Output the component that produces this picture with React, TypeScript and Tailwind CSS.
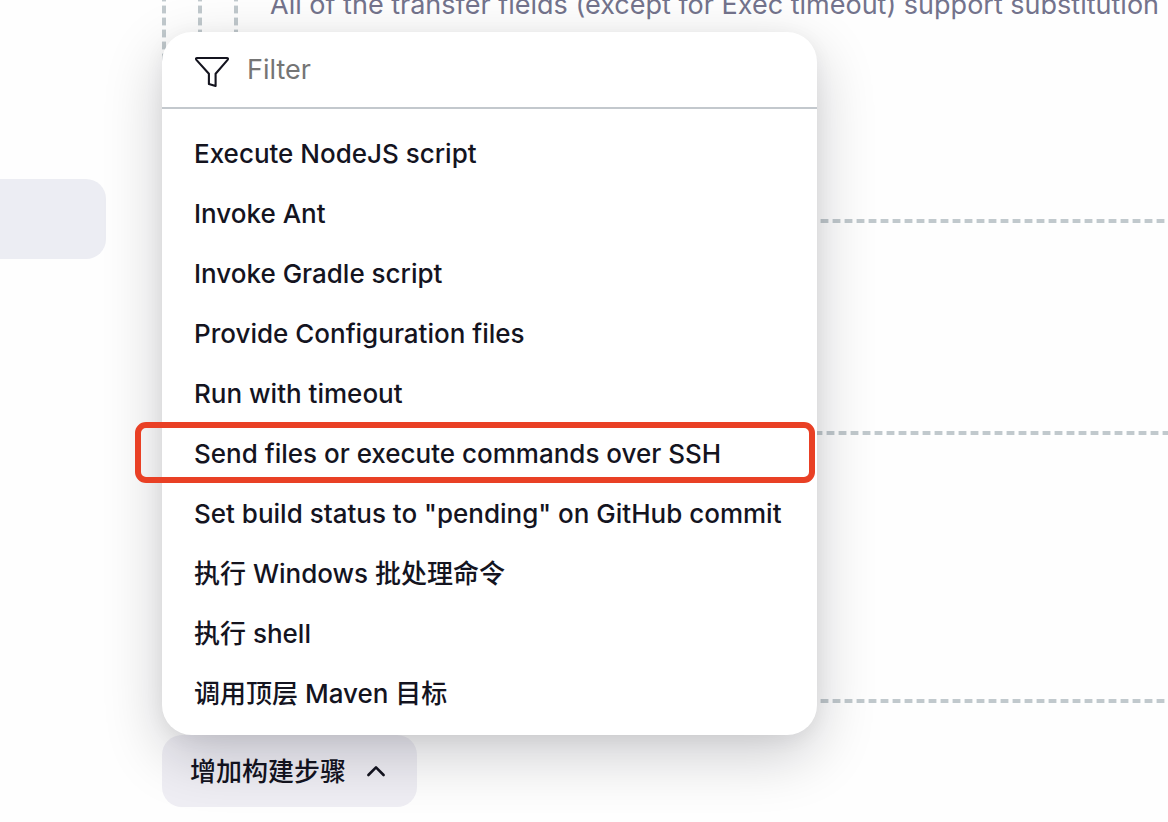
import React, { useState } from "react";

const steps = [
  "Execute NodeJS script",
  "Invoke Ant",
  "Invoke Gradle script",
  "Provide Configuration files",
  "Run with timeout",
  "Send files or execute commands over SSH",
  "Set build status to \"pending\" on GitHub commit",
  "执行 Windows 批处理命令",
  "执行 shell",
  "调用顶层 Maven 目标",
];

const highlighted = "Send files or execute commands over SSH";

const dashedLeft =
  "bg-[linear-gradient(to_bottom,#e4e8ea_1px,#c1c9cd_1px_8px,#e4e8ea_8px_9px,transparent_9px)] bg-size-[4px_12px] bg-repeat-y bg-position-[0_6px] pl-9";
const dashedLine =
  "h-1 bg-[linear-gradient(to_right,#e4e8ea_1px,#c1c9cd_1px_8px,#e4e8ea_8px_9px,transparent_9px)] bg-size-[12px_4px] bg-repeat-x -ml-9";

function FilterIcon() {
  return (
    <svg className="size-9 shrink-0" viewBox="0 0 36 36" fill="none" stroke="currentColor" strokeWidth="2.1" strokeLinecap="round" strokeLinejoin="round" aria-hidden="true">
      <path d="M3.2 6H32.8C34.2 6 34.3 7 33.6 7.9L21.6 21.8V34L14.9 31.9V21.8L2.4 7.9C1.7 7 1.8 6 3.2 6Z" />
    </svg>
  );
}

function ChevronUp() {
  return (
    <svg className="h-3 w-5" viewBox="0 0 20 12" fill="none" stroke="currentColor" strokeWidth="2.6" strokeLinecap="round" strokeLinejoin="round" aria-hidden="true">
      <path d="M2.4 10L10 2.4L17.6 10" />
    </svg>
  );
}

function StepMenu() {
  const [filter, setFilter] = useState("");
  const visible = steps.filter((s) => s.toLowerCase().includes(filter.toLowerCase()));
  return (
    <div className="absolute bottom-full left-0 w-max min-w-[655px] rounded-[30px] bg-white shadow-[0_20px_60px_rgba(0,0,20,0.2),0_4px_20px_rgba(0,0,20,0.05)]">
      <label className="flex items-center gap-[17px] border-b-2 border-[#c3c8cd] px-8 pt-5 pb-[19px]">
        <FilterIcon />
        <input
          aria-label="Filter"
          placeholder="Filter"
          value={filter}
          onChange={(e) => setFilter(e.target.value)}
          className="h-9 min-w-0 flex-1 bg-transparent text-[27px] outline-none placeholder:text-[#757575]"
        />
      </label>
      <ul className="pt-[14px] pb-3">
        {visible.map((step) => (
          <li key={step} className="relative">
            <button type="button" className="flex h-[60px] w-full items-center px-8 text-left font-medium whitespace-nowrap">
              {step}
            </button>
            {step === highlighted && (
              <span className="pointer-events-none absolute -top-px right-[2px] bottom-0 -left-[27px] rounded-[11px] border-6 border-[#e94025]" />
            )}
          </li>
        ))}
      </ul>
    </div>
  );
}

export default function App() {
  return (
    <div className="flex min-h-screen overflow-hidden bg-[#fefefe] font-['Inter','Noto_Sans_CJK_SC',sans-serif] text-[26px] text-[#14141f]">
      <aside className="w-[106px] shrink-0 pt-[179px]">
        <div className="h-20 rounded-r-[20px] bg-[#ecedf3]" />
      </aside>
      <main className="ml-14 min-w-0 flex-1">
        <section className={dashedLeft}>
          <div className={dashedLeft}>
            <div className={dashedLeft}>
              <p className="-mt-[13px] mb-[196px] h-9 text-[27px] leading-9 whitespace-nowrap text-[#73738c]">
                All of the transfer fields (except for Exec timeout) support substitution
              </p>
              <div className={`${dashedLine} bg-position-[10px_0]`} />
            </div>
            <div className={`${dashedLine} mt-[208px] bg-position-[4px_0]`} />
          </div>
          <div className={`${dashedLine} mt-[264px] bg-position-[10px_0]`} />
        </section>
        <div className="relative mt-8 w-max">
          <button type="button" className="flex h-[72px] items-center gap-5 rounded-[20px] bg-[#efeef4] pr-[31px] pl-7 font-medium">
            增加构建步骤
            <ChevronUp />
          </button>
          <StepMenu />
        </div>
      </main>
    </div>
  );
}
